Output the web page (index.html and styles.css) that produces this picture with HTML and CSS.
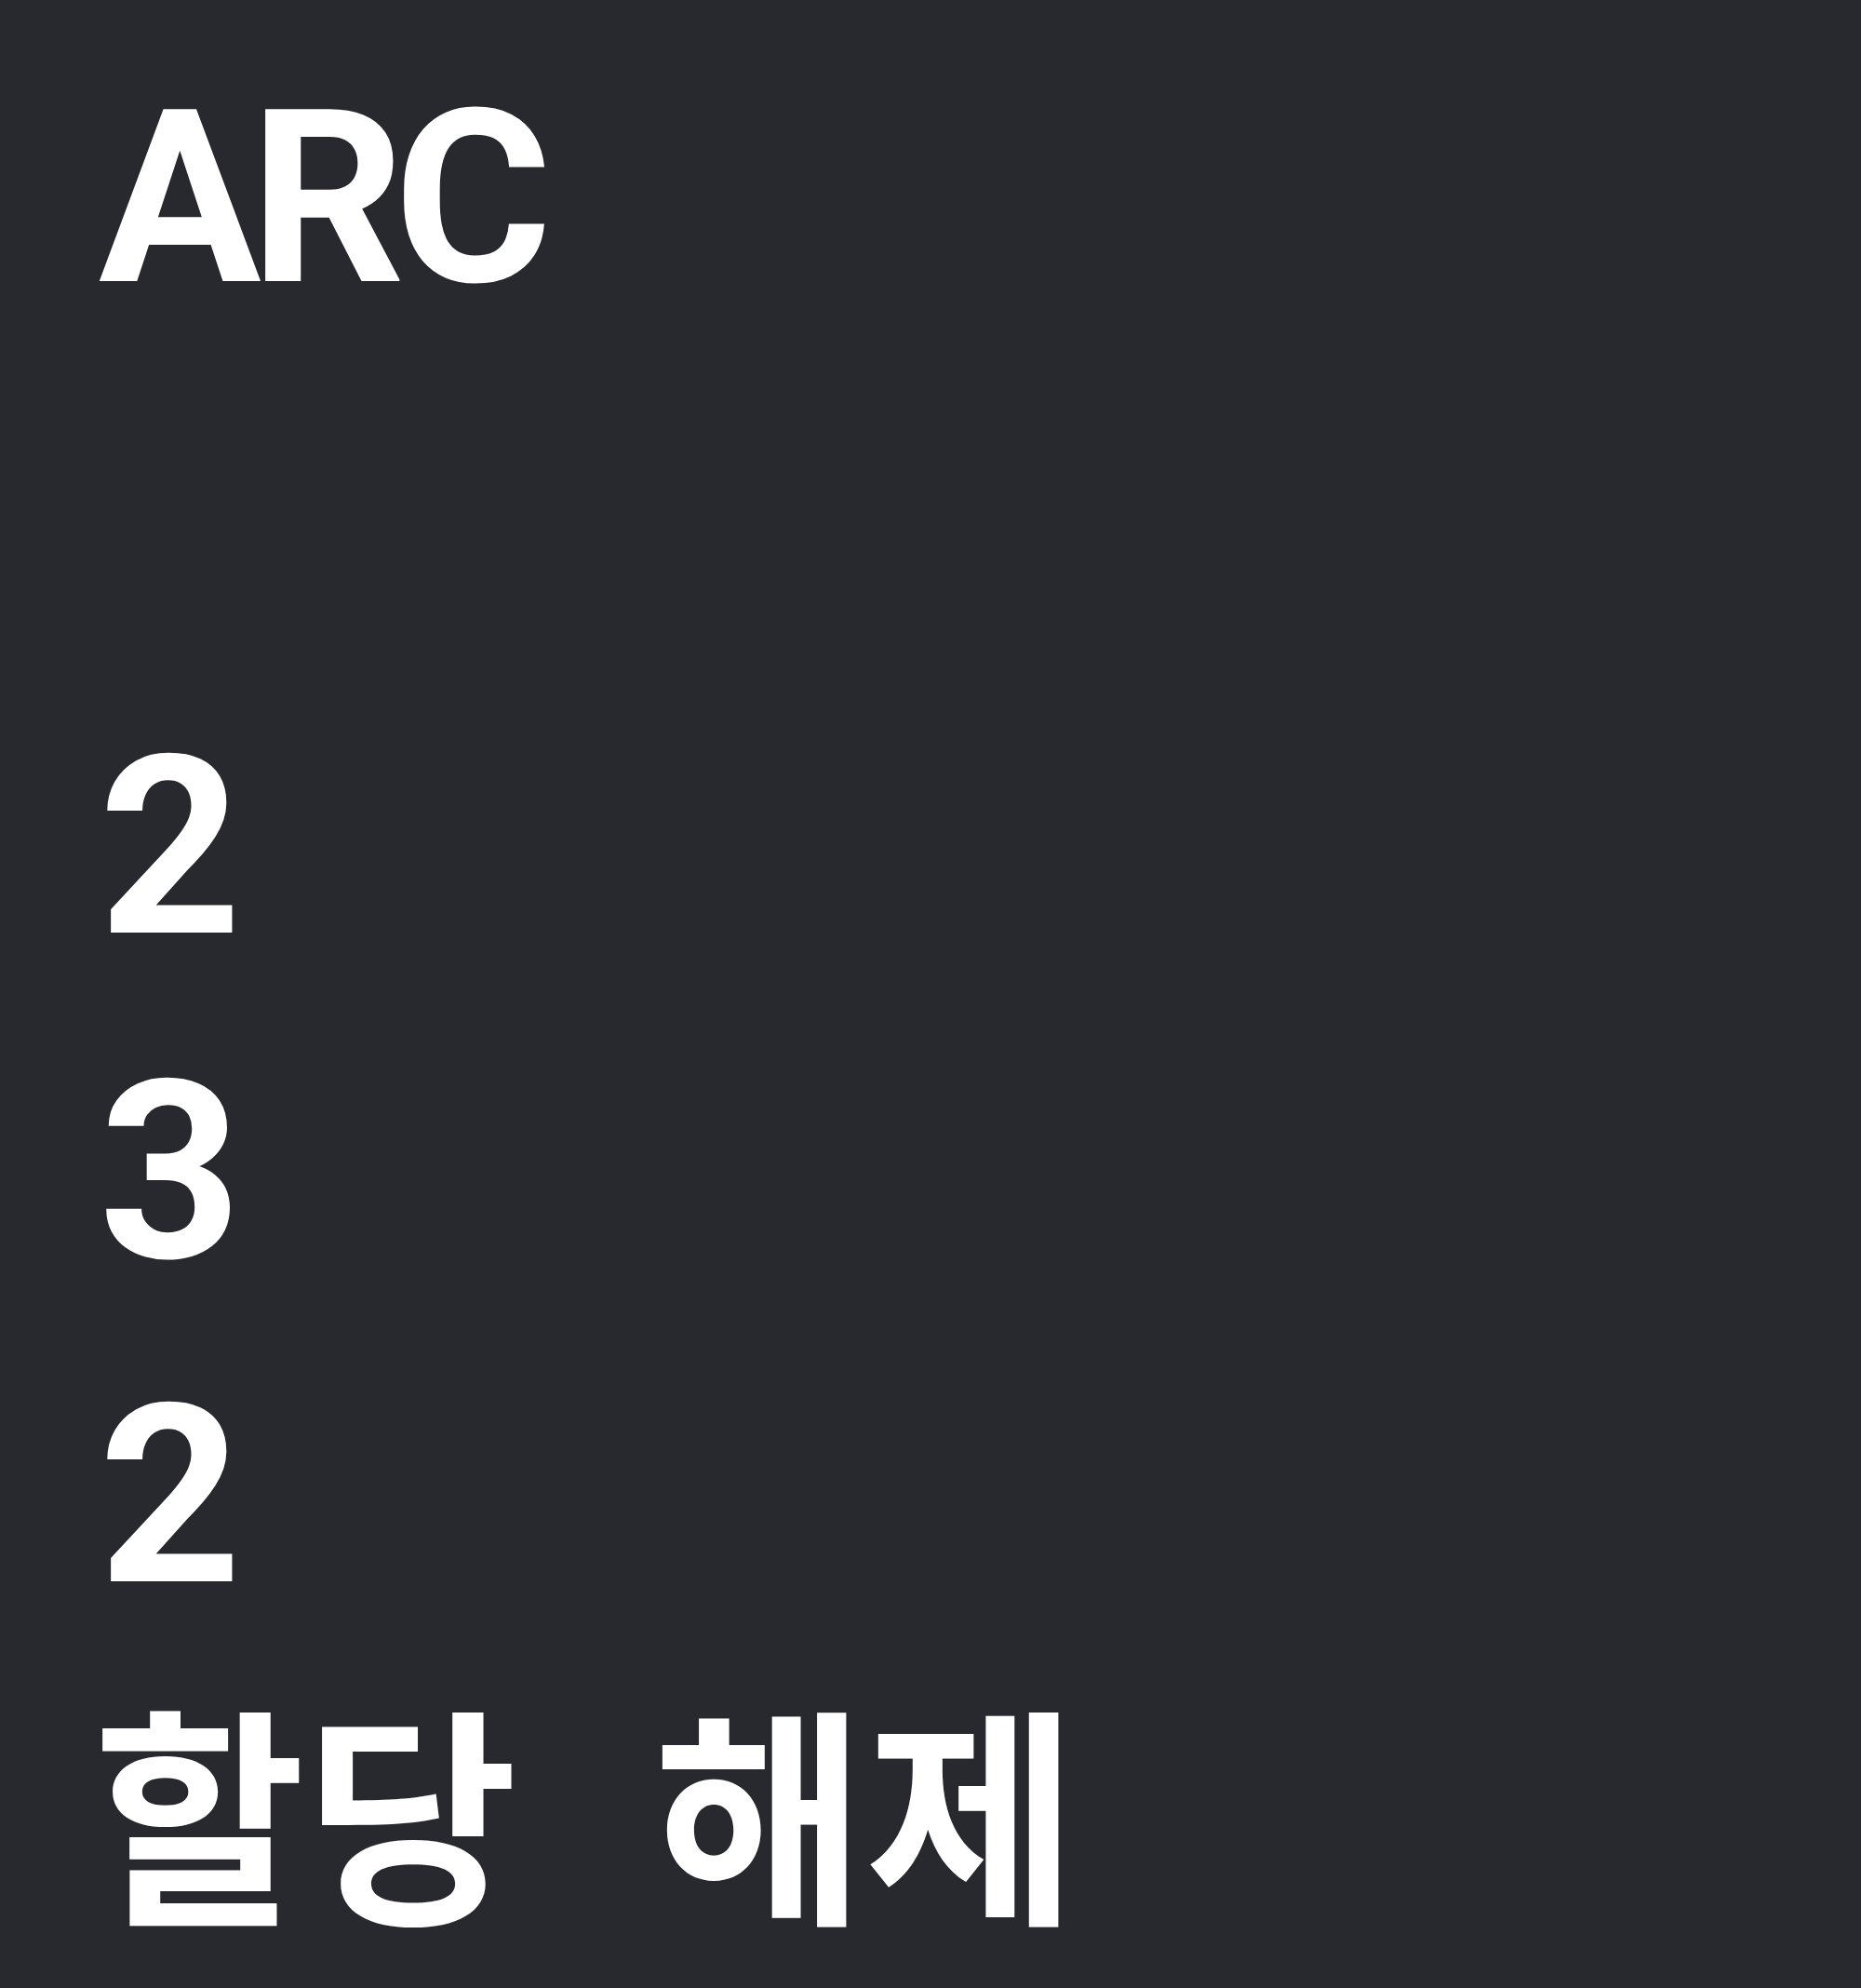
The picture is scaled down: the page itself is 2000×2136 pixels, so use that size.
FILE: index.html
```html
<!DOCTYPE html>
<html lang="ko">
<head>
<meta charset="utf-8">
<title>ARC</title>
<link rel="stylesheet" href="styles.css">
</head>
<body>
<main class="page">
  <h1 class="title">ARC</h1>
  <ul class="counts">
    <li class="count">2</li>
    <li class="count">3</li>
    <li class="count">2</li>
  </ul>
  <div class="action">할당 해제</div>
</main>
</body>
</html>
```
FILE: styles.css
```css
html, body {
  margin: 0;
  padding: 0;
  background: #28292f;
}
body {
  width: 2000px;
  min-height: 2136px;
  color: #ffffff;
  font-family: Roboto, "Noto Sans CJK KR", sans-serif;
  font-weight: 700;
  font-size: 268px;
  line-height: 348.5px;
}
.page {
  padding: 39px 0 0 106px;
}
.title {
  margin: 0 0 348.5px 0;
  font-size: 260px;
  font-weight: inherit;
  line-height: 348.5px;
  letter-spacing: -12px;
}
.counts {
  list-style: none;
  margin: 0;
  padding: 0;
}
.count {
  margin: 0;
}
.action {
  margin: 8px 0 0 -6px;
  font-size: 248px;
  line-height: 348.5px;
  word-spacing: 84px;
}
```
